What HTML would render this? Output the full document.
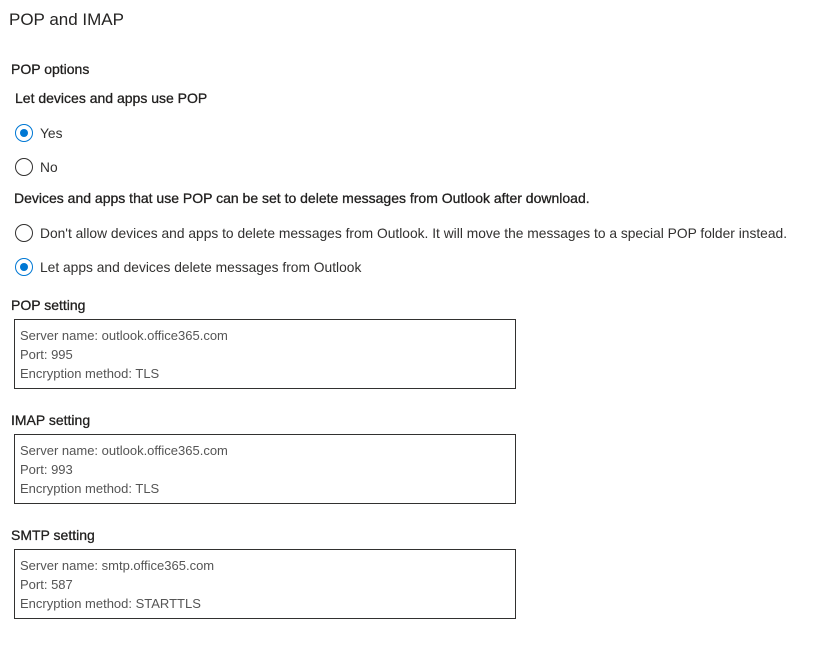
<!DOCTYPE html>
<html><head><meta charset="utf-8"><style>
body{margin:0;width:815px;height:665px;background:#fff;font-family:"Liberation Sans",sans-serif;color:#201f1e;position:relative;overflow:hidden}
.t{position:absolute;white-space:nowrap;line-height:1}
.h{font-size:17px;left:9px;top:11px;color:#252423}
.l{font-size:13.8px;color:#323130}
.b{font-size:14px;color:#201f1e;-webkit-text-stroke:0.3px #201f1e}
.r{position:absolute;width:18px;height:18px;border:1.5px solid #323130;border-radius:50%;box-sizing:border-box;left:15px}
.r.on{border-color:#0078d4}
.r.on:after{content:"";position:absolute;left:3.5px;top:3.5px;width:8px;height:8px;border-radius:50%;background:#0078d4}
.box{position:absolute;left:14px;width:502px;height:70px;border:1px solid #323130;box-sizing:border-box;font-size:13px;color:#555;padding:6px 0 0 5px;line-height:19px}
</style></head><body>
<div class="t h">POP and IMAP</div>
<div class="t b" style="left:11px;top:62px">POP options</div>
<div class="t b" style="left:15px;top:91px">Let devices and apps use POP</div>
<div class="r on" style="top:124px"></div><div class="t l" style="left:40px;top:127px">Yes</div>
<div class="r" style="top:158px"></div><div class="t l" style="left:40px;top:161px">No</div>
<div class="t b" style="left:14px;top:191px">Devices and apps that use POP can be set to delete messages from Outlook after download.</div>
<div class="r" style="top:224px"></div><div class="t l" style="left:40px;top:227px">Don't allow devices and apps to delete messages from Outlook. It will move the messages to a special POP folder instead.</div>
<div class="r on" style="top:258px"></div><div class="t l" style="left:40px;top:261px">Let apps and devices delete messages from Outlook</div>
<div class="t b" style="left:11px;top:298px">POP setting</div>
<div class="box" style="top:319px">Server name: outlook.office365.com<br>Port: 995<br>Encryption method: TLS</div>
<div class="t b" style="left:11px;top:413px">IMAP setting</div>
<div class="box" style="top:434px">Server name: outlook.office365.com<br>Port: 993<br>Encryption method: TLS</div>
<div class="t b" style="left:11px;top:528px">SMTP setting</div>
<div class="box" style="top:549px">Server name: smtp.office365.com<br>Port: 587<br>Encryption method: STARTTLS</div>
</body></html>
